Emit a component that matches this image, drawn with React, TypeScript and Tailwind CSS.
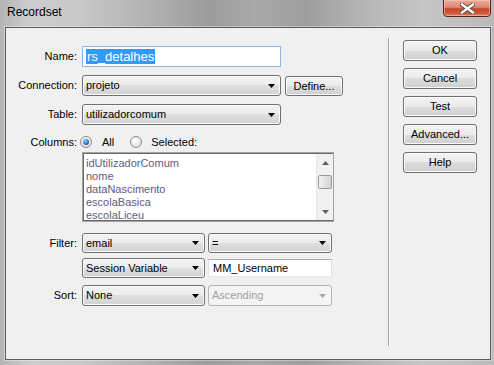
import React from "react";

function Arrow({ disabled }: { disabled?: boolean }) {
  return (
    <svg width="7" height="4" viewBox="0 0 7 4" className="shrink-0">
      <polygon points="0,0 7,0 3.5,4" fill={disabled ? "#a8a8a8" : "#000"} />
    </svg>
  );
}

function Select({ text, w, h = 21, disabled }: { text: string; w: string; h?: number; disabled?: boolean }) {
  return (
    <div
      className={`${w} flex items-center justify-between pl-[3px] pr-[5px] rounded-[3px] border ${
        disabled
          ? "border-[#b4b4b4] bg-[#f4f4f4] text-[#a0a0a0]"
          : "border-[#707070] bg-[linear-gradient(#f3f3f3,#ececec_50%,#dfdfdf_50%,#d3d3d3)] shadow-[inset_0_0_0_1px_#fbfbfb]"
      }`}
      style={{ height: h }}
    >
      <span className="leading-none">{text}</span>
      <Arrow disabled={disabled} />
    </div>
  );
}

function Button({ children, className = "" }: { children: React.ReactNode; className?: string }) {
  return (
    <div
      className={`flex items-center justify-center rounded-[3px] border border-[#707070] bg-[linear-gradient(#f3f3f3,#ebebeb_50%,#dddddd_50%,#cfcfcf)] shadow-[inset_0_0_0_1px_#fbfbfb] leading-none ${className}`}
    >
      {children}
    </div>
  );
}

function Radio({ checked }: { checked?: boolean }) {
  return (
    <div className="w-[12px] h-[12px] rounded-full border border-[#8a8a8a] bg-[radial-gradient(circle_at_40%_35%,#ffffff,#d8d8d8)] flex items-center justify-center shrink-0">
      {checked && (
        <div className="w-[6px] h-[6px] rounded-full bg-[radial-gradient(circle_at_40%_35%,#9fd4ff,#1f6fc0_60%,#0d3f7a)]" />
      )}
    </div>
  );
}

function Label({ children }: { children: React.ReactNode }) {
  return <div className="w-[71px] text-right shrink-0 leading-none">{children}</div>;
}

const columns = ["idUtilizadorComum", "nome", "dataNascimento", "escolaBasica", "escolaLiceu"];

export default function App() {
  return (
    <div className="w-[494px] h-[365px] overflow-hidden font-['Liberation_Sans',Arial,sans-serif] text-[11px] text-black bg-[linear-gradient(90deg,#b4b4b4_0%,#cdcdcd_6%,#c8c8c8_16%,#b2b2b2_30%,#9c9c9c_42%,#a8a8a8_52%,#9e9e9e_62%,#b6b6b6_74%,#c6c6c6_86%,#bababa_100%)]">
      <div className="flex h-[27px]">
        <div className="pl-[7px] pt-[6px] text-[12px] leading-none text-black">Recordset</div>
        <div className="ml-auto mr-[3px] w-[48px] h-[18px] -mt-[1px] rounded-b-[4px] border border-[#5b2318] bg-[linear-gradient(#eaa998,#dc8a74_45%,#c6462c_55%,#d05c3e_85%,#e2866e)] shadow-[inset_0_0_0_1px_rgba(255,210,200,0.5)] flex items-center justify-center">
          <svg width="15" height="11" viewBox="0 0 15 11">
            <path d="M2 1.5 L13 9.5 M13 1.5 L2 9.5" stroke="#4a4a4a" strokeWidth="4.2" strokeLinecap="square" />
            <path d="M2 1.5 L13 9.5 M13 1.5 L2 9.5" stroke="#ffffff" strokeWidth="2.4" strokeLinecap="square" />
          </svg>
        </div>
      </div>

      <div className="ml-[5px] w-[486px] h-[333px] border border-[#5c5c5c] bg-[#f0f0f0] flex shadow-[0_0_0_1px_rgba(255,255,255,0.35)]">
        <div className="w-[382px] pt-[18px] flex flex-col">
          <div className="flex items-center h-[21px]">
            <Label>Name:</Label>
            <div className="ml-[5px] w-[199px] h-[21px] border border-[#8db6e3] bg-white flex items-center pl-[3px]">
              <span className="bg-[#3399ff] text-white text-[13px] leading-[15px] px-[1px]">rs_detalhes</span>
            </div>
          </div>

          <div className="flex items-center h-[21px] mt-[8px]">
            <Label>Connection:</Label>
            <div className="ml-[5px]">
              <Select text="projeto" w="w-[199px]" />
            </div>
            <Button className="ml-[4px] w-[58px] h-[20px] mt-[1px]">Define...</Button>
          </div>

          <div className="flex items-center h-[21px] mt-[8px]">
            <Label>Table:</Label>
            <div className="ml-[5px]">
              <Select text="utilizadorcomum" w="w-[199px]" />
            </div>
          </div>

          <div className="flex items-center h-[14px] mt-[10px]">
            <Label>Columns:</Label>
            <div className="ml-[3px]">
              <Radio checked />
            </div>
            <span className="ml-[10px] leading-none">All</span>
            <div className="ml-[16px]">
              <Radio />
            </div>
            <span className="ml-[9px] leading-none">Selected:</span>
          </div>

          <div className="flex mt-[3px]">
            <div className="w-[76px] shrink-0" />
            <div className="w-[252px] h-[70px] border border-[#a3a3a3] p-0 flex">
              <div className="flex-1 border border-[#6a6a6a] border-r-0 bg-white flex overflow-hidden">
                <div className="flex-1 pl-[2px] pt-[3px] text-[#5d5d7c] leading-[13px]">
                  {columns.map((c) => (
                    <div key={c}>{c}</div>
                  ))}
                </div>
                <div className="w-[17px] bg-[#f1f1f1] border-l border-[#e6e6e6] flex flex-col">
                  <div className="h-[17px] flex items-center justify-center">
                    <svg width="7" height="4" viewBox="0 0 7 4">
                      <polygon points="3.5,0 7,4 0,4" fill="#5e5e5e" />
                    </svg>
                  </div>
                  <div className="mx-auto mt-[4px] w-[14px] h-[14px] rounded-[2px] border border-[#9a9a9a] bg-[linear-gradient(90deg,#f2f2f2,#e2e2e2_50%,#d2d2d2)]" />
                  <div className="flex-1" />
                  <div className="h-[17px] flex items-center justify-center">
                    <svg width="7" height="4" viewBox="0 0 7 4">
                      <polygon points="0,0 7,0 3.5,4" fill="#5e5e5e" />
                    </svg>
                  </div>
                </div>
              </div>
            </div>
          </div>

          <div className="flex items-center h-[20px] mt-[11px]">
            <Label>Filter:</Label>
            <div className="ml-[5px]">
              <Select text="email" w="w-[123px]" h={20} />
            </div>
            <div className="ml-[3px]">
              <Select text="=" w="w-[124px]" h={20} />
            </div>
          </div>

          <div className="flex items-center h-[20px] mt-[5px]">
            <div className="w-[76px] shrink-0" />
            <Select text="Session Variable" w="w-[123px]" h={20} />
            <div className="ml-[3px] w-[124px] h-[18px] border border-[#abadb3] border-l-[#dbdfe6] border-r-[#dbdfe6] border-b-[#e3e9ef] bg-white flex items-center pl-[4px] leading-none">
              MM_Username
            </div>
          </div>

          <div className="flex items-center h-[21px] mt-[7px]">
            <Label>Sort:</Label>
            <div className="ml-[5px]">
              <Select text="None" w="w-[123px]" />
            </div>
            <div className="ml-[3px]">
              <Select text="Ascending" w="w-[124px]" disabled />
            </div>
          </div>
        </div>

        <div className="w-[2px] mt-[10px] mb-[13px] border-l border-[#a0a0a0] border-r border-r-white" />

        <div className="pl-[13px] pt-[12px] flex flex-col gap-[7px]">
          <Button className="w-[74px] h-[21px]">OK</Button>
          <Button className="w-[74px] h-[21px]">Cancel</Button>
          <Button className="w-[74px] h-[21px]">Test</Button>
          <Button className="w-[74px] h-[21px]">Advanced...</Button>
          <Button className="w-[74px] h-[21px]">Help</Button>
        </div>
      </div>
    </div>
  );
}
